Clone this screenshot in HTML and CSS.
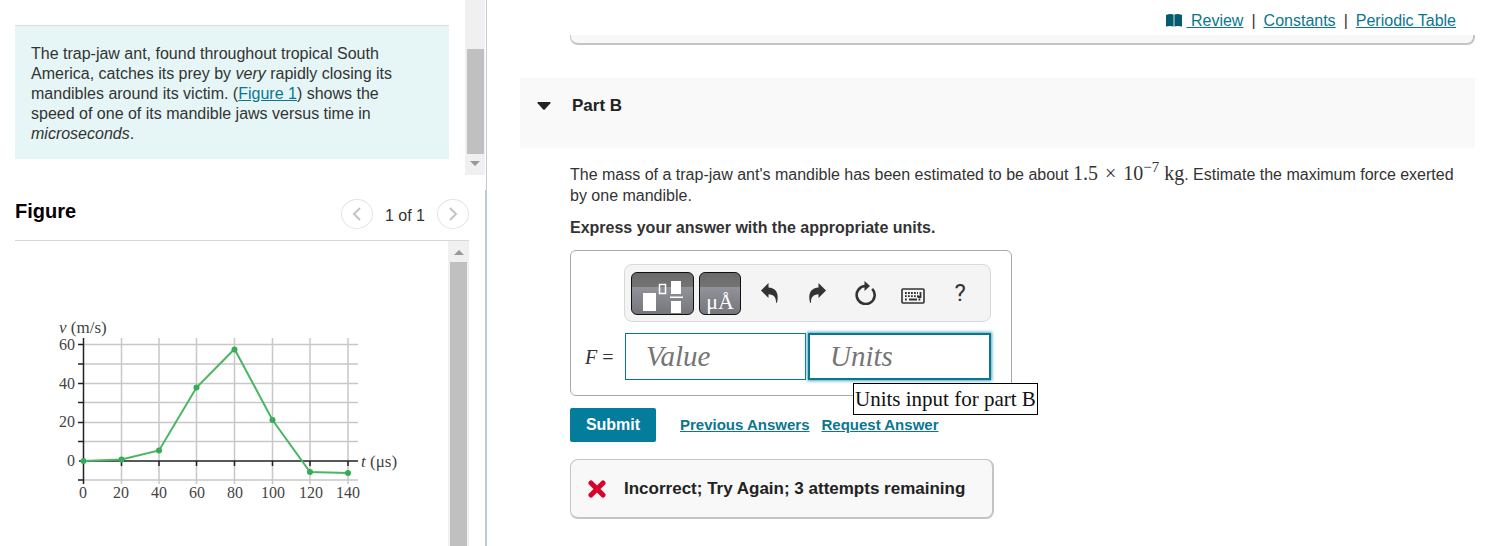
FILE: index.html
```
<!DOCTYPE html>
<html lang="en">
<head>
  <meta charset="UTF-8" />
  <meta name="viewport" content="width=device-width, initial-scale=1.0" />
  <title>Part B</title>
  <link rel="stylesheet" href="styles.css">
</head>
<body>
  <div class="page">
    <aside class="sidebar">
      <section class="intro">
        <p class="intro-text">The trap-jaw ant, found throughout tropical South America, catches its prey by <em>very</em> rapidly closing its mandibles around its victim. (<a href="#figure">Figure 1</a>) shows the speed of one of its mandible jaws versus time in <em>microseconds</em>.</p>
        <div class="scrollbar scrollbar-intro">
          <div class="thumb"></div>
          <div class="arrow arrow-down"></div>
        </div>
      </section>

      <section class="figure" id="figure">
        <header class="figure-header">
          <h2>Figure</h2>
          <nav class="pager">
            <button class="pager-btn" aria-label="Previous figure">
              <svg width="10" height="14" viewBox="0 0 10 14"><path d="M8 1L2 7l6 6" /></svg>
            </button>
            <span>1 of 1</span>
            <button class="pager-btn" aria-label="Next figure">
              <svg width="10" height="14" viewBox="0 0 10 14"><path d="M2 1l6 6-6 6" /></svg>
            </button>
          </nav>
        </header>
        <div class="figure-body">
          <svg class="chart" width="380" height="200" viewBox="0 0 380 200">
            <path class="grid" d="M43 34.5H318M43 54H318M43 73.5H318M43 92.5H318M43 112.5H318M43 131.5H318M43 170H318M81.5 28V174M119 28V174M156.5 28V174M194.5 28V174M232.5 28V174M270 28V174M308 28V174" />
            <path class="axis" d="M43.5 28V174M39 151H318M38 34.5h5M38 54h5M38 73.5h5M38 92.5h5M38 112.5h5M38 131.5h5M38 170h5M81.5 151v5M119 151v5M156.5 151v5M194.5 151v5M232.5 151v5M270 151v5M308 151v5" />
            <polyline class="line" points="43.5,151 81.5,149.5 119,140.5 156.5,77.5 194.5,39 232.5,110 270,162 308,163" />
            <g class="dots">
              <circle cx="43.5" cy="151" r="3" />
              <circle cx="81.5" cy="149.5" r="3" />
              <circle cx="119" cy="140.5" r="3" />
              <circle cx="156.5" cy="77.5" r="3" />
              <circle cx="194.5" cy="39.5" r="3" />
              <circle cx="232.5" cy="110" r="3" />
              <circle cx="270" cy="162" r="3" />
              <circle cx="308" cy="163" r="3" />
            </g>
            <g class="axis-title">
              <text x="19" y="23"><tspan font-style="italic">v</tspan> (m/s)</text>
              <text x="321" y="157"><tspan font-style="italic">t</tspan> (μs)</text>
            </g>
            <g class="ticks" text-anchor="end">
              <text x="35" y="40">60</text>
              <text x="35" y="79">40</text>
              <text x="35" y="117">20</text>
              <text x="35" y="156">0</text>
            </g>
            <g class="ticks" text-anchor="middle">
              <text x="43" y="188">0</text>
              <text x="81" y="188">20</text>
              <text x="119" y="188">40</text>
              <text x="157" y="188">60</text>
              <text x="195" y="188">80</text>
              <text x="233" y="188">100</text>
              <text x="271" y="188">120</text>
              <text x="308" y="188">140</text>
            </g>
          </svg>
          <div class="scrollbar scrollbar-figure">
            <div class="arrow arrow-up"></div>
            <div class="thumb"></div>
          </div>
        </div>
      </section>
    </aside>

    <main class="content">
      <nav class="top-links">
        <svg width="16" height="13" viewBox="0 0 16 13"><path fill="#045a6e" d="M0 1Q4-.6 7.6 .6V12.4Q4 11.600 0 12.600zM8.400 .6Q12-.6 16 1V12.600Q12 11.600 8.400 12.400z" /></svg>
        <a class="review" href="#review">&nbsp;Review</a>
        <span>|</span>
        <a href="#constants">Constants</a>
        <span>|</span>
        <a href="#table">Periodic Table</a>
      </nav>
      <div class="previous-part"></div>

      <header class="part-header">
        <svg width="14" height="8" viewBox="0 0 14 8"><path fill="#222" d="M1 0h12q1 .4.4 1.200L8 7.200q-1 1-2 0L.6 1.200Q0 .4 1 0z" /></svg>
        <h2>Part B</h2>
      </header>

      <div class="part-body">
        <p class="question">The mass of a trap-jaw ant's mandible has been estimated to be about <span class="math">1.5<span class="times">×</span>10<sup>−7</sup> kg</span>. Estimate the maximum force exerted by one mandible.</p>
        <p class="instruction">Express your answer with the appropriate units.</p>

        <div class="answer-box">
          <div class="toolbar">
            <button class="palette palette-templates" aria-label="Templates">
              <svg width="42" height="34" viewBox="0 0 42 34">
                <path fill="#fff" d="M1 13h13v18H1zM29 1h10v13H29zM29 21h10v12H29zM28 16.500h13v1.500H28z" />
                <path fill="none" stroke="#fff" stroke-width="1.500" d="M17.500 4.500h6v9h-6z" />
              </svg>
            </button>
            <button class="palette palette-symbols" aria-label="Symbols">μÅ</button>
            <div class="tools">
              <button class="tool" aria-label="Undo">
                <svg width="18" height="20" viewBox="0 0 18 20"><path d="M0 7.500L7.500 0v4.500C14 4.800 18.500 9 16 19.500l-1 .5c.3-5.500-2-8.500-7.500-8.800V15z" /></svg>
              </button>
              <button class="tool" aria-label="Redo">
                <svg width="18" height="20" viewBox="0 0 18 20"><path d="M18 7.500L10.500 0v4.500C4 4.800-.5 9 2 19.500l1 .5c-.3-5.500 2-8.500 7.500-8.800V15z" /></svg>
              </button>
              <button class="tool" aria-label="Reset">
                <svg width="22" height="24" viewBox="0 0 22 24"><path fill="none" stroke="#333" stroke-width="2.600" d="M18.200 7.800A9 9 0 1 1 11.500 5" /><path d="M10.500 0L16 5l-5.500 5z" /></svg>
              </button>
              <button class="tool" aria-label="Keyboard">
                <svg class="keyboard" width="24" height="16" viewBox="0 0 24 16">
                  <rect x="1" y="1" width="22" height="14" rx="1" fill="none" stroke="#333" stroke-width="1.600" />
                  <path fill="none" stroke="#333" stroke-width="1.800" stroke-dasharray="1.800 1.200" d="M4 5h13M4 8.200h14M4 11.500h3M17.500 11.500h3" />
                  <path fill="none" stroke="#333" stroke-width="1.800" d="M8 11.500h8M19.500 4v5h-3" />
                </svg>
              </button>
              <button class="tool help" aria-label="Help">?</button>
            </div>
          </div>
          <div class="inputs">
            <label for="value"><i>F</i> =</label>
            <input id="value" type="text" placeholder="Value">
            <input id="units" class="focused" type="text" placeholder="Units" aria-label="Units input for part B">
          </div>
          <div class="tooltip">Units input for part B</div>
        </div>

        <div class="actions">
          <button class="submit">Submit</button>
          <a href="#previous">Previous Answers</a>
          <a href="#request">Request Answer</a>
        </div>

        <div class="feedback">
          <svg width="18" height="18" viewBox="0 0 18 18"><path stroke="#d9002b" stroke-width="5" stroke-linecap="round" d="M3 3l12 12M15 3L3 15" /></svg>
          <span>Incorrect; Try Again; 3 attempts remaining</span>
        </div>
      </div>
    </main>
  </div>
</body>
</html>
```

FILE: styles.css
```
* {
  box-sizing: border-box;
}
body {
  margin: 0;
  font-family: "Liberation Sans", Arial, sans-serif;
  font-size: 16px;
  line-height: 20px;
  color: #333;
  background: #fff;
}
h2, p {
  margin: 0;
}
button {
  padding: 0;
  font-family: inherit;
  cursor: pointer;
}
a {
  color: #0b7690;
}
svg {
  display: block;
  flex-shrink: 0;
}
.page {
  display: flex;
  min-height: 100vh;
}

/* left column */
.sidebar {
  display: flex;
  flex-direction: column;
  flex: 0 0 487px;
}
.intro {
  display: flex;
  align-items: flex-start;
  gap: 16px;
  padding: 0 1px 15px 15px;
  border-right: 1px solid #c0cad6;
}
.intro-text {
  flex: 1;
  margin-top: 25px;
  padding: 18px 40px 15px 16px;
  border-top: 1px solid #d5e0e0;
  background: #e6f6f6;
}
.scrollbar {
  display: flex;
  flex-direction: column;
  align-items: center;
  width: 20px;
  background: #f0f0f0;
}
.scrollbar-intro {
  height: 175px;
  padding-top: 49px;
}
.thumb {
  width: 17px;
  background: #c0c0c0;
}
.scrollbar-intro .thumb {
  height: 105px;
  margin-bottom: 7px;
}
.arrow {
  border: 5px solid transparent;
}
.arrow-down {
  border-top-color: #999;
  border-bottom: 0;
}
.arrow-up {
  border-bottom-color: #999;
  border-top: 0;
  margin: 9px 0 7px;
}
.figure {
  display: flex;
  flex-direction: column;
  flex: 1;
  padding: 0 16px 0 15px;
  border-right: 2px solid #c0cad3;
}
.figure-header {
  display: flex;
  justify-content: space-between;
  height: 51px;
  padding-top: 9px;
  border-bottom: 1px solid #d8d8d8;
}
.figure-header h2 {
  font-size: 20px;
  line-height: 24px;
  color: #000;
}
.pager {
  display: flex;
  gap: 12px;
  line-height: 34px;
}
.pager-btn {
  display: flex;
  align-items: center;
  justify-content: center;
  width: 32px;
  height: 30px;
  border: 1px solid #e3e3e3;
  border-radius: 50%;
  background: #fff;
}
.pager-btn path {
  fill: none;
  stroke: #c4c4c4;
  stroke-width: 2;
}
.figure-body {
  display: flex;
  justify-content: space-between;
  flex: 1;
}
.chart {
  margin: 69px 0 0 25px;
  font-family: "Liberation Serif", "Times New Roman", serif;
}
.chart text {
  fill: #444;
}
.axis-title {
  font-size: 17px;
}
.ticks {
  font-size: 16px;
}
.grid {
  stroke: #c8c8c8;
  stroke-width: 1.5;
}
.axis {
  stroke: #222;
  stroke-width: 1.5;
}
.line {
  fill: none;
  stroke: #4ab562;
  stroke-width: 2;
}
.dots {
  fill: #35ad58;
}
.scrollbar-figure {
  width: 21px;
}
.scrollbar-figure .thumb {
  flex: 1;
}

/* right column */
.content {
  flex: 1;
  padding: 0 13px 20px 33px;
}
.top-links {
  display: flex;
  align-items: center;
  justify-content: flex-end;
  gap: 8px;
  height: 35px;
  padding: 6px 19px 0 0;
}
.top-links .review {
  margin-left: -3px;
}
.previous-part {
  height: 10px;
  margin-left: 50px;
  border: 1px solid #c4c4c4;
  border-width: 0 2px 2px 1px;
  border-radius: 0 0 8px 8px;
  background: #f8f8f8;
}
.part-header {
  display: flex;
  align-items: center;
  gap: 21px;
  height: 70px;
  margin-top: 33px;
  padding: 0 17px 15px;
  background: #f9f9f9;
}
.part-header h2 {
  font-size: 17px;
  color: #222;
}
.part-body {
  padding: 15px 0 0 50px;
}
.question {
  padding-right: 9px;
  line-height: 21px;
}
.math {
  font-family: "Liberation Serif", "Times New Roman", serif;
  font-size: 20px;
  line-height: 20px;
  white-space: nowrap;
}
.times {
  margin: 0 7px;
}
.math sup {
  font-size: 15px;
  line-height: 0;
}
.instruction {
  margin-top: 12px;
  font-weight: bold;
}
.answer-box {
  position: relative;
  width: 442px;
  margin-top: 12px;
  padding: 13px 20px 14px 14px;
  border: 1px solid #aaa;
  border-radius: 6px;
}
.toolbar {
  display: flex;
  align-items: center;
  gap: 5px;
  height: 58px;
  margin-left: 39px;
  padding: 0 6px;
  border: 1px solid #d8d8d8;
  border-radius: 8px;
  background: #f4f4f4;
}
.palette {
  display: flex;
  justify-content: center;
  height: 43px;
  border: 1px solid #111;
  border-radius: 6px;
  background: linear-gradient(#6a6a6a, #747474 35%, #92929a 35%, #75757c);
}
.palette-templates {
  width: 63px;
  padding-top: 7px;
}
.palette-symbols {
  width: 42px;
  padding-top: 17px;
  font-family: "Liberation Serif", "Times New Roman", serif;
  font-size: 22px;
  line-height: 24px;
  color: #fff;
}
.tools {
  display: flex;
  flex: 1;
}
.tool {
  display: flex;
  align-items: center;
  justify-content: center;
  flex: 1;
  height: 43px;
  border: 0;
  background: none;
  color: #333;
}
.tool path {
  fill: #333;
}
.tool path[fill="none"] {
  fill: none;
}
.tool .keyboard {
  margin-top: 5px;
}
.help {
  font-family: Roboto, sans-serif;
  font-size: 24px;
}
.inputs {
  display: flex;
  align-items: center;
  gap: 2px;
  height: 49px;
  margin-top: 10px;
}
.inputs label {
  width: 38px;
  font-family: "Liberation Serif", "Times New Roman", serif;
  font-size: 20px;
  white-space: nowrap;
}
.inputs input {
  flex: 1;
  min-width: 0;
  height: 47px;
  padding: 0 20px;
  border: 1px solid #0b7690;
  border-radius: 0;
  outline: none;
  font-family: "Liberation Serif", "Times New Roman", serif;
  font-size: 29px;
  font-style: italic;
}
.inputs input::placeholder {
  color: #757575;
}
.inputs .focused {
  border-width: 2px;
  box-shadow: 0 0 3px 1px #4fa9c2;
}
.tooltip {
  position: absolute;
  top: 132px;
  left: 282px;
  padding: 0 1px;
  border: 1px solid #000;
  background: #fff;
  color: #111;
  font-family: "Liberation Serif", "Times New Roman", serif;
  font-size: 21px;
  line-height: 30px;
  white-space: nowrap;
}
.actions {
  display: flex;
  align-items: center;
  gap: 12px;
  margin-top: 12px;
  font-size: 15px;
  font-weight: bold;
}
.submit {
  width: 86px;
  height: 34px;
  margin-right: 12px;
  border: 0;
  border-radius: 2px;
  background: #047c9c;
  color: #fff;
  font-size: 16px;
  font-weight: bold;
}
.feedback {
  display: flex;
  align-items: center;
  gap: 18px;
  width: 424px;
  height: 60px;
  margin-top: 17px;
  padding-left: 17px;
  border: 1px solid #c4c4c4;
  border-width: 1px 2px 2px 1px;
  border-radius: 8px;
  background: #f8f8f8;
  color: #222;
  font-size: 17px;
  font-weight: bold;
}
```
